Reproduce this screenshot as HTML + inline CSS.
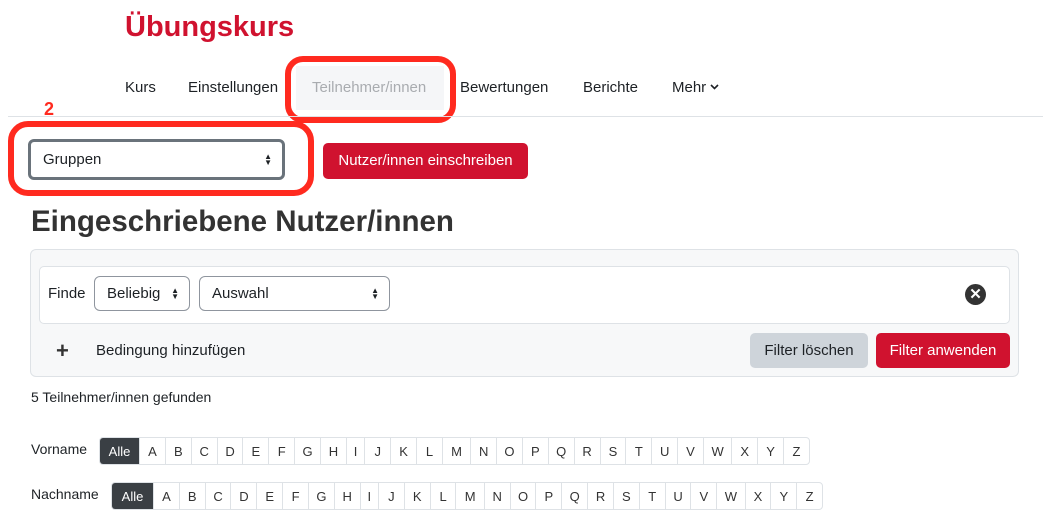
<!DOCTYPE html>
<html><head><meta charset="utf-8"><style>
body{margin:0;width:1048px;height:524px;background:#fff;font-family:"Liberation Sans",sans-serif;color:#1d2125;position:relative;overflow:hidden}
.a{position:absolute;white-space:nowrap}
.nav{font-size:15px;top:79px}
.sel{position:absolute;background:#fff;border:1px solid #8f959e;border-radius:6px;box-sizing:border-box;font-size:15px;padding-left:12px;display:flex;align-items:center}
.sel .ar{position:absolute;right:10px;top:50%;transform:translateY(-50%);font-size:8px;line-height:6px;text-align:center}
.bar{position:absolute;display:flex;border:1px solid #dee2e6;border-radius:4px;height:28px;box-sizing:border-box;font-size:13px}
.bar span{border-left:1px solid #dee2e6;display:flex;align-items:center;justify-content:center;color:#333}
.bar span:first-child{border-left:none;background:#3a3f44;color:#fff;border-radius:3px 0 0 3px}
</style></head><body>
<div class="a" style="left:125px;top:11px;font-size:29px;font-weight:bold;color:#d0122f">Übungskurs</div>
<div class="a" style="left:296px;top:66px;width:148px;height:44px;background:#f5f6f8"></div>
<div class="a" style="left:285px;top:56px;width:171px;height:67px;border:6px solid #ff2a1f;border-radius:18px;box-sizing:border-box"></div>
<div class="a nav" style="left:125px">Kurs</div>
<div class="a nav" style="left:188px">Einstellungen</div>
<div class="a nav" style="left:312px;color:#a9acb0">Teilnehmer/innen</div>
<div class="a nav" style="left:460px">Bewertungen</div>
<div class="a nav" style="left:583px">Berichte</div>
<div class="a nav" style="left:672px">Mehr <svg width="9" height="6" viewBox="0 0 9 6" style="vertical-align:2px"><path d="M1 1l3.5 3.5L8 1" fill="none" stroke="#1d2125" stroke-width="1.6"/></svg></div>
<div class="a" style="left:8px;top:116px;width:1035px;height:1px;background:#dee2e6"></div>
<div class="a" style="left:44px;top:99px;font-size:18px;font-weight:bold;color:#ff2a1f">2</div>
<div class="a" style="left:8px;top:121px;width:306px;height:75px;border:6px solid #ff2a1f;border-radius:20px;box-sizing:border-box"></div>
<div class="sel" style="left:28px;top:139px;width:257px;height:41px;border:3px solid #6a737b;padding-left:12px">Gruppen<div class="ar">▲<br>▼</div></div>
<div class="a" style="left:323px;top:143px;width:205px;height:36px;background:#d0122f;border-radius:5px;color:#fff;font-size:15px;line-height:36px;text-align:center">Nutzer/innen einschreiben</div>
<div class="a" style="left:31px;top:205px;font-size:29.5px;font-weight:bold;color:#333">Eingeschriebene Nutzer/innen</div>
<div class="a" style="left:30px;top:249px;width:989px;height:128px;background:#f7f8f9;border:1px solid #dee2e6;border-radius:6px;box-sizing:border-box"></div>
<div class="a" style="left:39px;top:266px;width:971px;height:58px;background:#fff;border:1px solid #dee2e6;border-radius:5px;box-sizing:border-box"></div>
<div class="a" style="left:48px;top:285px;font-size:15px">Finde</div>
<div class="sel" style="left:94px;top:276px;width:96px;height:35px">Beliebig<div class="ar">▲<br>▼</div></div>
<div class="sel" style="left:199px;top:276px;width:191px;height:35px">Auswahl<div class="ar">▲<br>▼</div></div>
<div class="a" style="left:965px;top:284px;width:21px;height:21px;border-radius:50%;background:#333;color:#fff;font-size:15px;font-weight:bold;line-height:21px;text-align:center">✕</div>
<div class="a" style="left:56px;top:338px;font-size:22px;font-weight:bold;color:#333">+</div>
<div class="a" style="left:96px;top:342px;font-size:15px">Bedingung hinzufügen</div>
<div class="a" style="left:750px;top:333px;width:118px;height:35px;background:#ced4da;border-radius:5px;font-size:15px;line-height:35px;text-align:center">Filter löschen</div>
<div class="a" style="left:876px;top:333px;width:134px;height:35px;background:#d0122f;color:#fff;border-radius:5px;font-size:15px;line-height:35px;text-align:center">Filter anwenden</div>
<div class="a" style="left:31px;top:389px;font-size:14px">5 Teilnehmer/innen gefunden</div>
<div class="a" style="left:31px;top:441px;font-size:14px">Vorname</div>
<div class="bar" style="left:99px;top:437px;width:711px">
<span style="width:39px">Alle</span><span style="flex:1">A</span><span style="flex:1">B</span><span style="flex:1">C</span><span style="flex:1">D</span><span style="flex:1">E</span><span style="flex:1">F</span><span style="flex:1">G</span><span style="flex:1">H</span><span style="flex:.7">I</span><span style="flex:1">J</span><span style="flex:1">K</span><span style="flex:1">L</span><span style="flex:1.1">M</span><span style="flex:1">N</span><span style="flex:1">O</span><span style="flex:1">P</span><span style="flex:1">Q</span><span style="flex:1">R</span><span style="flex:1">S</span><span style="flex:1">T</span><span style="flex:1">U</span><span style="flex:1">V</span><span style="flex:1.1">W</span><span style="flex:1">X</span><span style="flex:1">Y</span><span style="flex:1">Z</span></div>
<div class="a" style="left:31px;top:486px;font-size:14px">Nachname</div>
<div class="bar" style="left:111px;top:482px;width:712px">
<span style="width:41px">Alle</span><span style="flex:1">A</span><span style="flex:1">B</span><span style="flex:1">C</span><span style="flex:1">D</span><span style="flex:1">E</span><span style="flex:1">F</span><span style="flex:1">G</span><span style="flex:1">H</span><span style="flex:.7">I</span><span style="flex:1">J</span><span style="flex:1">K</span><span style="flex:1">L</span><span style="flex:1.1">M</span><span style="flex:1">N</span><span style="flex:1">O</span><span style="flex:1">P</span><span style="flex:1">Q</span><span style="flex:1">R</span><span style="flex:1">S</span><span style="flex:1">T</span><span style="flex:1">U</span><span style="flex:1">V</span><span style="flex:1.1">W</span><span style="flex:1">X</span><span style="flex:1">Y</span><span style="flex:1">Z</span></div>
</body></html>
